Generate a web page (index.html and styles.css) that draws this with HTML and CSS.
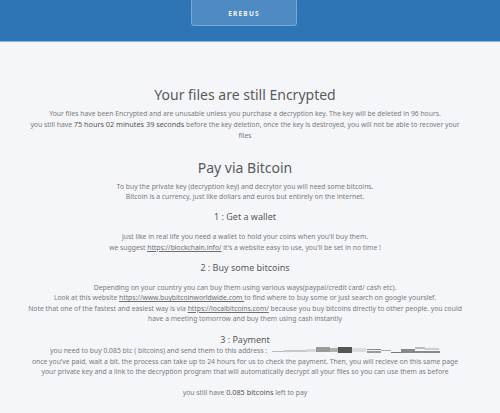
FILE: index.html
```html
<!DOCTYPE html>
<html>
<head>
<meta charset="utf-8">
<link rel="stylesheet" href="styles.css">
</head>
<body>
<header class="topbar">
  <div class="brand">EREBUS</div>
</header>
<main class="content">
  <h1 class="title">Your files are still Encrypted</h1>
  <p class="text">Your files have been Encrypted and are unusable unless you purchase a decryption key. The key will be deleted in 96 hours.<br>you still have <span class="strong">75 hours 02 minutes 39 seconds</span> before the key deletion, once the key is destroyed, you will not be able to recover your<br>files</p>

  <h1 class="title title-pay">Pay via Bitcoin</h1>
  <p class="text">To buy the private key (decryption key) and decrytor you will need some bitcoins.<br>Bitcoin is a currency, just like dollars and euros but entirely on the internet.</p>

  <h2 class="step">1 : Get a wallet</h2>
  <p class="text">Just like in real life you need a wallet to hold your coins when you'll buy them.<br>we suggest <a class="link" href="#">https://blockchain.info/</a> it's a website easy to use, you'll be set in no time !</p>

  <h2 class="step">2 : Buy some bitcoins</h2>
  <p class="text">Depending on your country you can buy them using various ways(paypal/credit card/ cash etc).<br>Look at this website <a class="link" href="#">https://www.buybitcoinworldwide.com </a>to find where to buy some or just search on google yourslef.<br>Note that one of the fastest and easiest way is via <a class="link" href="#">https://localbitcoins.com/</a> because you buy bitcoins directly to other people. you could<br>have a meeting tomorrow and buy them using cash instantly</p>

  <h2 class="step step-pay">3 : Payment</h2>
  <p class="text">you need to buy 0.085 btc ( bitcoins) and send them to this address : <span class="addr"><svg width="168" height="7" viewBox="0 0 168 7"><rect x="0" y="4" width="12" height="1" fill="#bbb"/><rect x="12" y="3" width="22" height="2" fill="#c8c8c8"/><rect x="34" y="2" width="10" height="3" fill="#d8d8d8"/><rect x="44" y="0" width="14" height="5" fill="#9a9a9a"/><rect x="58" y="1" width="8" height="4" fill="#b0b0b0"/><rect x="66" y="0" width="14" height="6" fill="#555"/><rect x="80" y="1" width="14" height="4" fill="#ddd"/><rect x="95" y="2" width="14" height="1" fill="#888"/><rect x="95" y="4" width="14" height="2" fill="#999"/><rect x="109" y="3" width="10" height="1" fill="#aaa"/><rect x="119" y="5" width="10" height="1" fill="#777"/><rect x="129" y="2" width="14" height="4" fill="#888"/><rect x="143" y="0" width="10" height="2" fill="#bbb"/><rect x="153" y="1" width="14" height="2" fill="#ccc"/><rect x="143" y="4" width="25" height="2" fill="#888"/></svg></span><br>once you've paid, wait a bit. the process can take up to 24 hours for us to check the payment. Then, you will recieve on this same page<br>your private key and a link to the decryption program that will automatically decrypt all your files so you can use them as before</p>

  <p class="text remaining">you still have <span class="strong">0.085 bitcoins</span> left to pay</p>
</main>
</body>
</html>
```
FILE: styles.css
```css
html, body {
  margin: 0;
  padding: 0;
}
body {
  background: #f5f6fa;
  font-family: "Noto Sans", "Open Sans", sans-serif;
  color: #7a7a7a;
  height: 413px;
  overflow: hidden;
}
.topbar {
  height: 41px;
  background: #2e75b5;
  border-bottom: 1px solid #8db4dd;
  display: flex;
  justify-content: center;
  padding-right: 12px;
}
.brand {
  width: 106px;
  height: 28px;
  margin-top: -2px;
  box-sizing: border-box;
  background: #4e8bc3;
  border: 1px solid #7aa8d6;
  border-radius: 3px;
  color: #f2f6fb;
  font-size: 6.5px;
  font-weight: 700;
  letter-spacing: 1.2px;
  display: flex;
  align-items: center;
  justify-content: center;
  padding-top: 2px;
}
.content {
  width: 470px;
  margin-left: 10px;
  text-align: center;
  padding-top: 44px;
}
.title {
  font-size: 14px;
  font-weight: 400;
  color: #5a5a5a;
  margin: 0;
  line-height: 18px;
}
.title-pay {
  margin-top: 18px;
}
.text {
  font-size: 6.8px;
  line-height: 10.3px;
  margin: 3px 0 0;
}
.title + .text {
  margin-top: 5px;
}
.strong {
  color: #555;
  font-size: 7.3px;
  font-weight: 400;
}
.step {
  font-size: 9px;
  font-weight: 400;
  color: #5a5a5a;
  margin: 9px 0 0;
  line-height: 12px;
}
.step-pay {
  margin-top: 10px;
}
.step + .text {
  margin-top: 9px;
}
.step-pay + .text {
  margin-top: 0;
}
.link {
  color: #6f6f6f;
  text-decoration: underline;
}
.addr {
  display: inline-block;
  vertical-align: -1px;
  margin-left: 3px;
}
.addr svg {
  display: block;
}
.remaining {
  margin-top: 10px;
}
```
